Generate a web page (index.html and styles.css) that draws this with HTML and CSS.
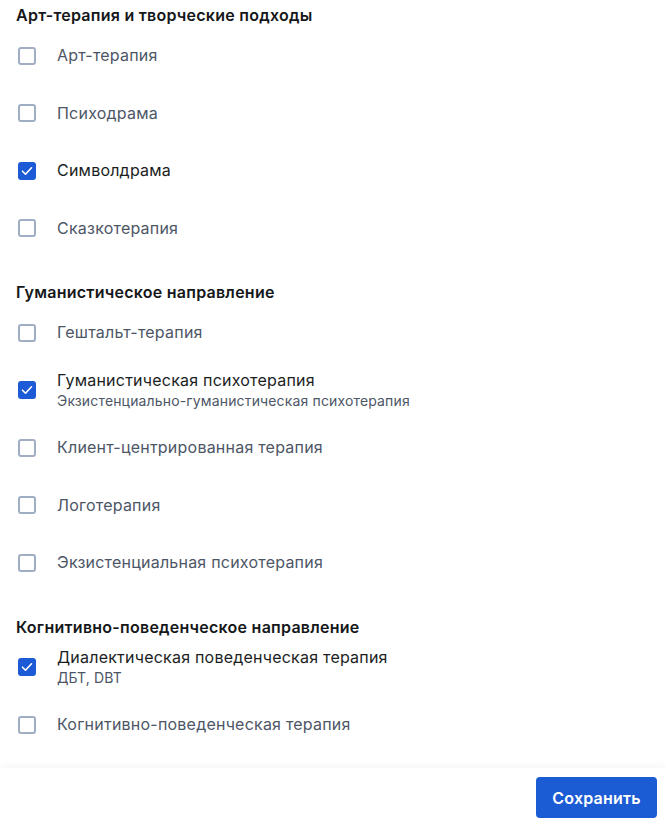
FILE: index.html
```html
<!DOCTYPE html>
<html lang="ru">
<head>
<meta charset="utf-8">
<link rel="stylesheet" href="styles.css">
</head>
<body>
<div class="page">
  <main class="content">
    <section class="group">
      <h2 class="group-title">Арт-терапия и творческие подходы</h2>
      <label class="item"><span class="box"></span><span class="text"><span class="title">Арт-терапия</span></span></label>
      <label class="item"><span class="box"></span><span class="text"><span class="title">Психодрама</span></span></label>
      <label class="item checked"><span class="box"><svg viewBox="0 0 18 18" width="18" height="18"><path d="M4.5 9.2l3 3 6-6.4" fill="none" stroke="#fff" stroke-width="1.6" stroke-linecap="round" stroke-linejoin="round"/></svg></span><span class="text"><span class="title">Символдрама</span></span></label>
      <label class="item"><span class="box"></span><span class="text"><span class="title">Сказкотерапия</span></span></label>
    </section>
    <section class="group">
      <h2 class="group-title">Гуманистическое направление</h2>
      <label class="item"><span class="box"></span><span class="text"><span class="title">Гештальт-терапия</span></span></label>
      <label class="item checked"><span class="box"><svg viewBox="0 0 18 18" width="18" height="18"><path d="M4.5 9.2l3 3 6-6.4" fill="none" stroke="#fff" stroke-width="1.6" stroke-linecap="round" stroke-linejoin="round"/></svg></span><span class="text"><span class="title">Гуманистическая психотерапия</span><span class="sub">Экзистенциально-гуманистическая психотерапия</span></span></label>
      <label class="item"><span class="box"></span><span class="text"><span class="title">Клиент-центрированная терапия</span></span></label>
      <label class="item"><span class="box"></span><span class="text"><span class="title">Логотерапия</span></span></label>
      <label class="item"><span class="box"></span><span class="text"><span class="title">Экзистенциальная психотерапия</span></span></label>
    </section>
    <section class="group">
      <h2 class="group-title">Когнитивно-поведенческое направление</h2>
      <label class="item checked"><span class="box"><svg viewBox="0 0 18 18" width="18" height="18"><path d="M4.5 9.2l3 3 6-6.4" fill="none" stroke="#fff" stroke-width="1.6" stroke-linecap="round" stroke-linejoin="round"/></svg></span><span class="text"><span class="title">Диалектическая поведенческая терапия</span><span class="sub">ДБТ, DBT</span></span></label>
      <label class="item"><span class="box"></span><span class="text"><span class="title">Когнитивно-поведенческая терапия</span></span></label>
    </section>
  </main>
  <footer class="footer">
    <button class="save" type="button">Сохранить</button>
  </footer>
</div>
</body>
</html>
```

FILE: styles.css
```css
* { box-sizing: border-box; }
html, body { margin: 0; padding: 0; background: #fff; }
body {
  font-family: Inter, "Noto Sans", "Liberation Sans", sans-serif;
}
.page {
  height: 826px;
  display: flex;
  flex-direction: column;
  overflow: hidden;
}
.content {
  flex: 1;
  overflow: hidden;
  padding: 3px 16px 0 16px;
}
.group + .group { margin-top: 23px; }
.group-title {
  margin: 0;
  font-size: 16px;
  line-height: 24px;
  font-weight: 600;
  letter-spacing: 0.25px;
  color: #15171a;
}
.item {
  display: flex;
  align-items: center;
  min-height: 57.5px;
  padding-left: 2px;
}
.box {
  flex: none;
  width: 18px;
  height: 18px;
  border: 2px solid #a0aec4;
  border-radius: 3px;
  background: #fff;
  margin-right: 21px;
  display: flex;
  align-items: center;
  justify-content: center;
}
.item.checked .box {
  background: #1d5bd6;
  border-color: #1d5bd6;
}
.box svg { flex: none; margin: -2px; }
.text { display: flex; flex-direction: column; }
.title {
  font-size: 16px;
  line-height: 21px;
  letter-spacing: 0.22px;
  color: #4d5666;
}
.item.checked .title { color: #1b1e23; }
.sub {
  font-size: 14px;
  line-height: 19px;
  letter-spacing: 0.15px;
  color: #4d5666;
}
.footer {
  flex: none;
  height: 58px;
  display: flex;
  justify-content: flex-end;
  align-items: center;
  padding: 1px 9px 0 0;
  background: #fff;
  box-shadow: 0 -3px 6px rgba(0, 0, 0, 0.03);
}
.save {
  width: 121px;
  height: 41px;
  border: none;
  border-radius: 4px;
  background: #1b5bd4;
  color: #fff;
  font-family: Inter, "Noto Sans", "Liberation Sans", sans-serif;
  font-size: 16px;
  font-weight: 600;
  letter-spacing: 0.2px;
  cursor: pointer;
}
```
